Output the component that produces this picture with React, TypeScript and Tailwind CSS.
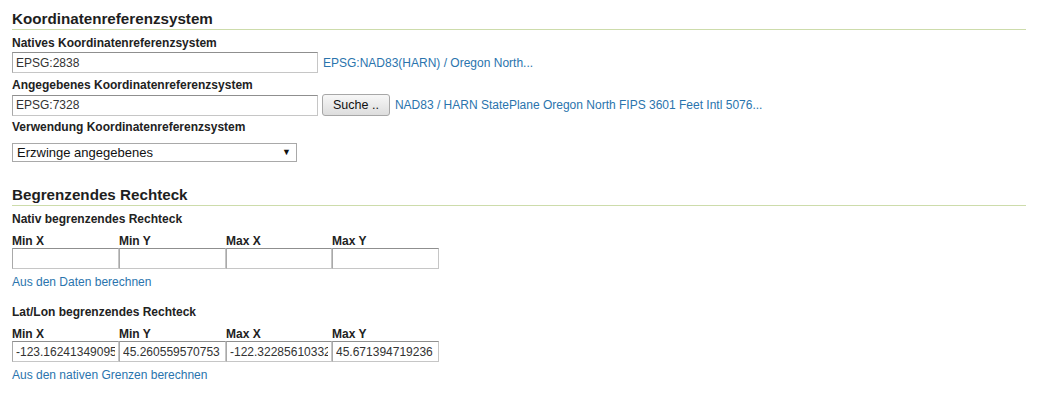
const BOX_BORDER =
  "border border-[#c6c6c6] border-t-[#8f8f8f] border-l-[#a9a9a9] bg-white";

function Label({ children, className = "" }: { children: React.ReactNode; className?: string }) {
  return <div className={`text-[12px] font-bold leading-[14px] text-[#222] ${className}`}>{children}</div>;
}

function Heading({ children, className = "" }: { children: React.ReactNode; className?: string }) {
  return (
    <h2 className={`border-b border-[#cddcab] text-[15.2px] font-bold leading-[20px] text-[#1e1e1e] ${className}`}>
      {children}
    </h2>
  );
}

function TextBox({ value, className = "" }: { value: string; className?: string }) {
  return (
    <input
      readOnly
      defaultValue={value}
      className={`h-[21px] px-[3px] text-[12px] text-[#333] outline-none ${BOX_BORDER} ${className}`}
    />
  );
}

function Link({ children, className = "" }: { children: React.ReactNode; className?: string }) {
  return (
    <a href="#" className={`text-[12px] leading-[16px] text-[#2a74ad] ${className}`}>
      {children}
    </a>
  );
}

const COLS = ["Min X", "Min Y", "Max X", "Max Y"];

function BBox({ values }: { values: string[] }) {
  return (
    <div className="grid w-[427px] grid-cols-[107px_107px_106px_107px]">
      {COLS.map((c) => (
        <Label key={c}>{c}</Label>
      ))}
      {values.map((v, i) => (
        <TextBox key={i} value={v} className="w-full min-w-0" />
      ))}
    </div>
  );
}

export default function App() {
  return (
    <div className="min-h-screen bg-white font-['Liberation_Sans',Arial,sans-serif]">
      <div className="ml-[12px] w-[1014px] pt-[9px]">
        <Heading>Koordinatenreferenzsystem</Heading>

        <Label className="mt-[6px]">Natives Koordinatenreferenzsystem</Label>
        <div className="mt-[2px] flex items-center">
          <TextBox value="EPSG:2838" className="w-[306px]" />
          <Link className="ml-[5px]">EPSG:NAD83(HARN) / Oregon North...</Link>
        </div>

        <Label className="mt-[5px]">Angegebenes Koordinatenreferenzsystem</Label>
        <div className="mt-[2px] flex items-center">
          <TextBox value="EPSG:7328" className="w-[306px]" />
          <button className="ml-[4px] h-[22px] rounded-[3px] border border-[#a7a7a7] bg-gradient-to-b from-[#f7f7f7] to-[#dddddd] px-[10px] text-[12.5px] text-[#111]">
            Suche ..
          </button>
          <Link className="ml-[5px]">NAD83 / HARN StatePlane Oregon North FIPS 3601 Feet Intl 5076...</Link>
        </div>

        <Label className="mt-[4px]">Verwendung Koordinatenreferenzsystem</Label>
        <div className="mt-[9px] flex h-[19px] w-[285px] items-center justify-between border border-[#a9a9a9] bg-white pl-[4px] pr-[5px] text-[13px] text-[#111]">
          <span>Erzwinge angegebenes</span>
          <span className="text-[9px] leading-none">▼</span>
        </div>

        <Heading className="mt-[23px]">Begrenzendes Rechteck</Heading>

        <Label className="mt-[6px]">Nativ begrenzendes Rechteck</Label>
        <div className="mt-[8px]">
          <BBox values={["", "", "", ""]} />
        </div>
        <div className="mt-[4px] leading-[16px]">
          <Link>Aus den Daten berechnen</Link>
        </div>

        <Label className="mt-[15px]">Lat/Lon begrenzendes Rechteck</Label>
        <div className="mt-[8px]">
          <BBox values={["-123.16241349095", "45.260559570753", "-122.32285610332", "45.671394719236"]} />
        </div>
        <div className="mt-[4px] leading-[16px]">
          <Link>Aus den nativen Grenzen berechnen</Link>
        </div>
      </div>
    </div>
  );
}
